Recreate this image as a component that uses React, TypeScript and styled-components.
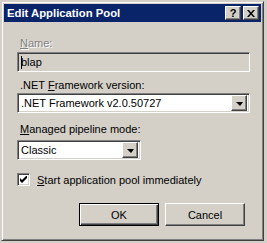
import React from 'react';
import styled, {createGlobalStyle} from "styled-components";

const GlobalStyle = createGlobalStyle`
    body {
        margin: 0;
        padding: 1px 0 0 1px;
        background: #d4d0c8;
        font-family: "Liberation Sans", Arial, sans-serif;
        font-size: 11px;
        color: #000;
    }
`

const Window = styled.div`
    box-sizing: border-box;
    width: 263px;
    height: 240px;
    background: #d4d0c8;
    border: 1px solid;
    border-color: #d4d0c8 #404040 #404040 #d4d0c8;
    box-shadow: inset 1px 1px #fff, inset -1px -1px #808080;
    padding: 2px;
    display: flex;
    flex-direction: column;
`

const TitleBar = styled.div`
    height: 18px;
    background: #0a246a;
    display: flex;
    align-items: center;
    padding: 0 2px 0 3px;
`

const Title = styled.span`
    color: #fff;
    font-weight: bold;
    font-size: 11.3px;
    flex: 1;
`

const CaptionButtons = styled.div`
    display: flex;
    gap: 2px;
`

const Raised = styled.div`
    box-sizing: border-box;
    background: #d4d0c8;
    border: 1px solid;
    border-color: #fff #404040 #404040 #fff;
    box-shadow: inset -1px -1px #808080;
`

const CaptionButton = styled(Raised)`
    width: 16px;
    height: 14px;
    display: flex;
    align-items: center;
    justify-content: center;
    font-weight: bold;
    font-size: 11px;
    line-height: 1;
`

const Content = styled.div`
    flex: 1;
    display: flex;
    flex-direction: column;
    padding: 15px 10px 0 13px;
`

const Label = styled.div<{ disabled?: boolean }>`
    margin-left: 3px;
    height: 13px;
    line-height: 13px;
    color: ${p => p.disabled ? '#808080' : '#000'};
    text-shadow: ${p => p.disabled ? '1px 1px #fff' : 'none'};
    & u {
        text-decoration-thickness: 1px;
    }
`

const Sunken = styled.div<{ width: number; white?: boolean }>`
    box-sizing: border-box;
    width: ${p => p.width}px;
    height: 20px;
    background: ${p => p.white ? '#fff' : '#d4d0c8'};
    border: 1px solid;
    border-color: #808080 #fff #fff #808080;
    box-shadow: inset 1px 1px #404040, inset -1px -1px #d4d0c8;
    display: flex;
    align-items: center;
    padding: 2px 2px 2px 3px;
`

const FieldText = styled.span`
    flex: 1;
    white-space: nowrap;
`

const Caret = styled.span`
    display: inline-block;
    width: 1px;
    height: 13px;
    background: #000;
    vertical-align: -3px;
    margin-right: -1px;
`

const DropButton = styled(Raised)`
    width: 16px;
    height: 16px;
    display: flex;
    align-items: center;
    justify-content: center;
`

const Arrow = styled.span`
    width: 0;
    height: 0;
    border-left: 4px solid transparent;
    border-right: 3px solid transparent;
    border-top: 4px solid #000;
    margin-top: 1px;
`

const Gap = styled.div<{ h: number }>`
    height: ${p => p.h}px;
    flex: none;
`

const CheckRow = styled.label`
    display: flex;
    align-items: center;
    gap: 7px;
    height: 13px;
`

const CheckBox = styled.span`
    box-sizing: border-box;
    width: 13px;
    height: 13px;
    background: #fff;
    border: 1px solid;
    border-color: #808080 #fff #fff #808080;
    box-shadow: inset 1px 1px #404040, inset -1px -1px #d4d0c8;
    display: flex;
    align-items: center;
    justify-content: center;
`

const ButtonRow = styled.div`
    display: flex;
    justify-content: flex-end;
    gap: 6px;
    margin-top: auto;
    margin-bottom: 12px;
    padding-right: 6px;
`

const Button = styled.div<{ isDefault?: boolean }>`
    box-sizing: border-box;
    width: 80px;
    height: 23px;
    display: flex;
    align-items: center;
    justify-content: center;
    background: #d4d0c8;
    border: 1px solid;
    border-color: ${p => p.isDefault ? '#000' : '#fff #404040 #404040 #fff'};
    box-shadow: ${p => p.isDefault
        ? 'inset 1px 1px #fff, inset -1px -1px #404040, inset -2px -2px #808080'
        : 'inset -1px -1px #808080'};
`

const Combo = ({text, width}: { text: string; width: number }) => (
    <Sunken width={width} white>
        <FieldText>{text}</FieldText>
        <DropButton><Arrow/></DropButton>
    </Sunken>
)

export default function App() {
    return (
        <>
            <GlobalStyle/>
            <Window>
                <TitleBar>
                    <Title>Edit Application Pool</Title>
                    <CaptionButtons>
                        <CaptionButton>?</CaptionButton>
                        <CaptionButton>
                            <svg width="8" height="7" viewBox="0 0 8 7">
                                <path d="M0 0h2l2 2.5L6 0h2L5 3.5 8 7H6L4 4.5 2 7H0l3-3.5z" fill="#000"/>
                            </svg>
                        </CaptionButton>
                    </CaptionButtons>
                </TitleBar>
                <Content>
                    <Label disabled><u>N</u>ame:</Label>
                    <Gap h={2}/>
                    <Sunken width={233}>
                        <FieldText><Caret/>blap</FieldText>
                    </Sunken>
                    <Gap h={7}/>
                    <Label>.NET <u>F</u>ramework version:</Label>
                    <Gap h={1}/>
                    <Combo text=".NET Framework v2.0.50727" width={233}/>
                    <Gap h={10}/>
                    <Label><u>M</u>anaged pipeline mode:</Label>
                    <Gap h={4}/>
                    <Combo text="Classic" width={124}/>
                    <Gap h={13}/>
                    <CheckRow>
                        <CheckBox>
                            <svg width="7" height="7" viewBox="0 0 7 7">
                                <path d="M0 2v3l2 2 5-5V-1L2 4z" fill="#000"/>
                            </svg>
                        </CheckBox>
                        <span><u>S</u>tart application pool immediately</span>
                    </CheckRow>
                    <ButtonRow>
                        <Button isDefault>OK</Button>
                        <Button>Cancel</Button>
                    </ButtonRow>
                </Content>
            </Window>
        </>
    );
}
